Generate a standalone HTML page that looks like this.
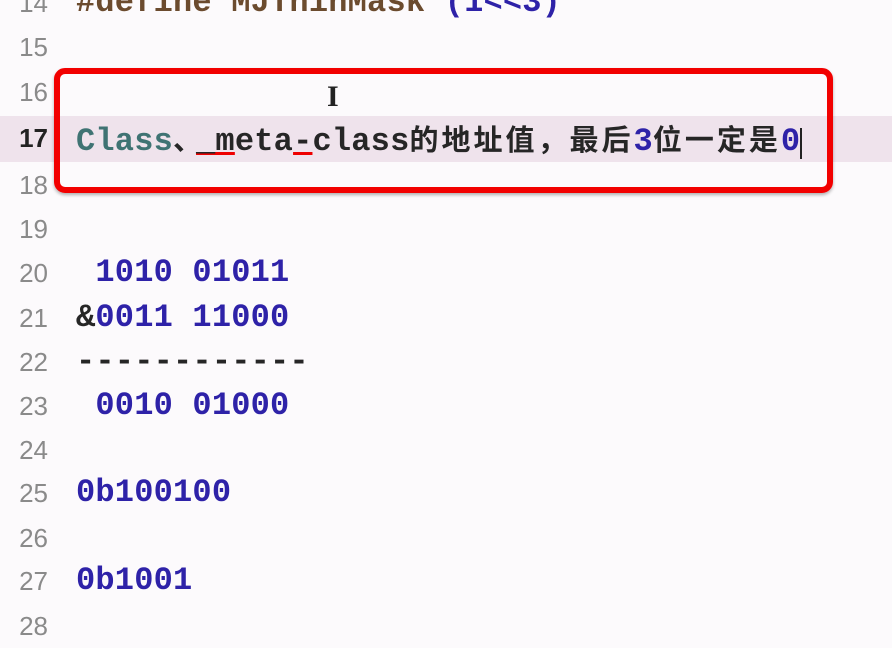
<!DOCTYPE html>
<html><head><meta charset="utf-8"><style>
body{margin:0;width:892px;height:646px;overflow:hidden;background:#fcfafc;position:relative;font-family:"Liberation Mono","Noto Sans CJK SC",monospace;}
.l{position:absolute;left:0;width:892px;height:44px;line-height:44px;}
.n{position:absolute;left:10px;width:38px;text-align:right;font-family:"Liberation Sans",sans-serif;font-size:26px;color:#8a8a8a;}
.c{position:absolute;left:76px;font-size:32px;color:#262626;white-space:pre;letter-spacing:0.2px;font-weight:bold;}
.b{color:#2e22a8;}
.t{color:#3f7373;}
.hl{background:#efe3ec;}
.box{position:absolute;left:54px;top:68px;width:767px;height:113px;border:6px solid #f20000;border-radius:11px;box-shadow:0 2px 3px rgba(0,0,0,.3);}
.cjk{font-family:"Noto Sans CJK SC",sans-serif;font-weight:bold;font-size:29px;letter-spacing:3px;}
</style></head><body>
<div class="l" style="top:-19px"><span class="n">14</span><span class="c" style="color:#6b4b2e">#define MJThinMask <span class="b">(1&lt;&lt;3)</span></span></div>
<div class="l" style="top:25px"><span class="n">15</span></div>
<div class="l" style="top:70px"><span class="n">16</span></div>
<div class="l hl" style="top:116px;height:46px"><span class="n" style="color:#222;font-weight:bold">17</span><span class="c"><span class="t">Class</span><span class="cjk" style="letter-spacing:-6px">、</span><span style="text-decoration:underline;text-decoration-color:#e00">_m</span>eta<span style="text-decoration:underline;text-decoration-color:#e00">-</span>class<span class="cjk">的地址值，最后</span><span class="b">3</span><span class="cjk">位一定是</span><span class="b">0</span><span style="border-left:2px solid #222;font-size:28px"> </span></span></div>
<div class="l" style="top:163px"><span class="n">18</span></div>
<div class="l" style="top:207px"><span class="n">19</span></div>
<div class="l" style="top:251px"><span class="n">20</span><span class="c b"> 1010 01011</span></div>
<div class="l" style="top:296px"><span class="n">21</span><span class="c"><span>&amp;</span><span class="b">0011 11000</span></span></div>
<div class="l" style="top:340px"><span class="n">22</span><span class="c">------------</span></div>
<div class="l" style="top:384px"><span class="n">23</span><span class="c b"> 0010 01000</span></div>
<div class="l" style="top:428px"><span class="n">24</span></div>
<div class="l" style="top:471px"><span class="n">25</span><span class="c b">0b100100</span></div>
<div class="l" style="top:516px"><span class="n">26</span></div>
<div class="l" style="top:559px"><span class="n">27</span><span class="c b">0b1001</span></div>
<div class="l" style="top:604px"><span class="n">28</span></div>
<div class="box"></div>
<div style="position:absolute;left:327px;top:80px;font-size:30px;font-family:'Liberation Serif',serif;font-weight:bold;color:#222">I</div>
</body></html>
